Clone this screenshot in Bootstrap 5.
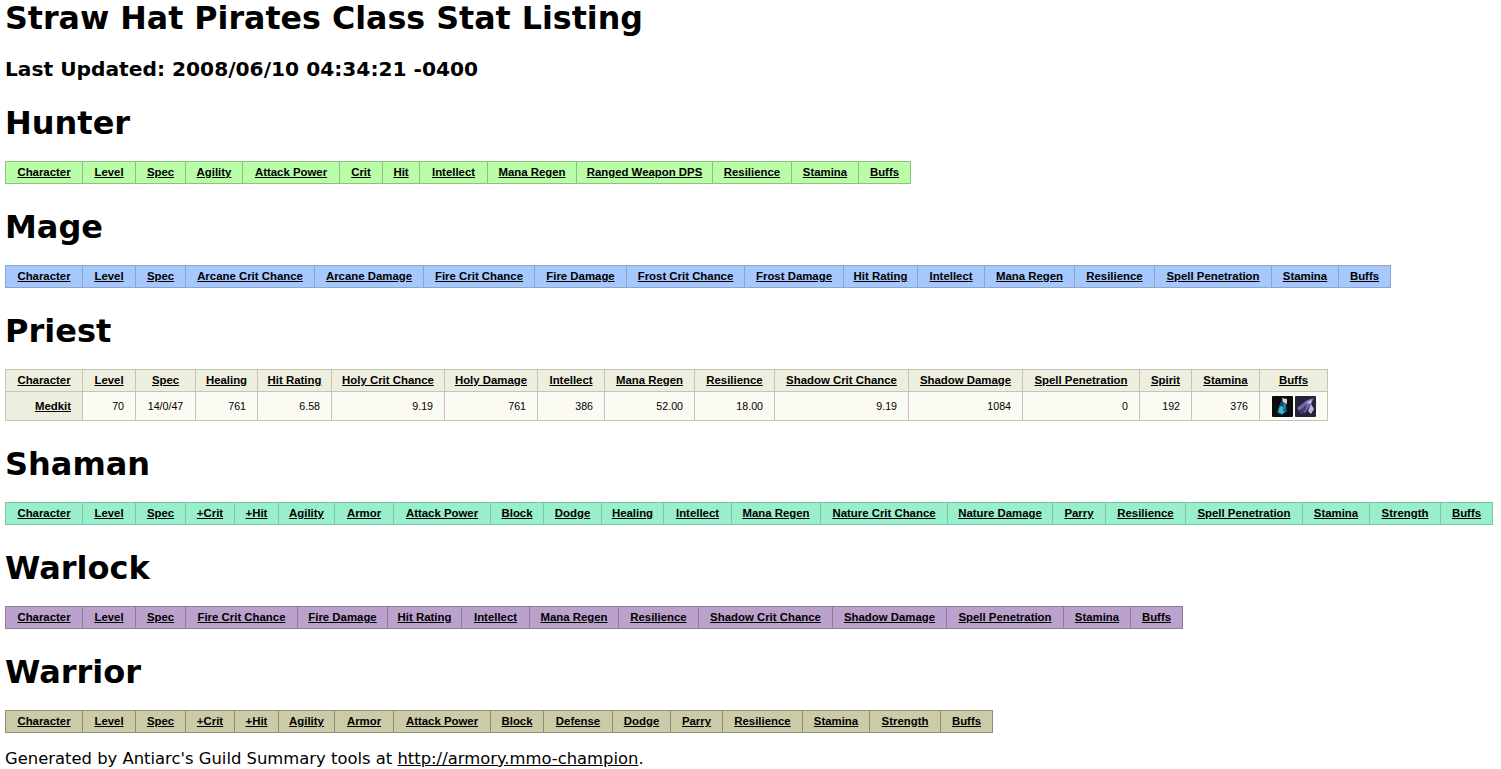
<!DOCTYPE html>
<html lang="en">
<head>
<meta charset="utf-8">
<title>Straw Hat Pirates Class Stat Listing</title>
<link href="https://cdn.jsdelivr.net/npm/bootstrap@5.3.0/dist/css/bootstrap.min.css" rel="stylesheet">
<style>
body { margin: 0; padding: 0 5px; font-family: "DejaVu Sans", sans-serif; color: #000; background: #fff; overflow-x: hidden; }
.page-title { font-size: 31.7px; font-weight: 700; line-height: 37px; margin: 0 0 21px; }
.updated { font-size: 20.2px; font-weight: 700; line-height: 23px; margin: 0 0 24px; }
.class-name { font-size: 32px; font-weight: 700; line-height: 37px; margin: 0 0 19px; }
.stat-table { width: auto; margin: 0 0 25px; border-collapse: collapse; font-family: "Liberation Sans", Arial, sans-serif; font-size: 10.67px; color: #000; }
.stat-table th, .stat-table td { padding: 0 11px; border: 1px solid #999; line-height: 21px; white-space: nowrap; background: transparent; box-shadow: none; color: #000; }
.stat-table th { padding: 0 4px; font-size: 11.4px; font-weight: 700; text-align: center; }
.stat-table a { color: #000; text-decoration: underline; }
.stat-table td, .stat-table th.rowhead { vertical-align: middle; height: 29px; }
.stat-table td { text-align: right; }
.stat-table td.spec, .stat-table td.buffs { text-align: center; padding: 0 4px; }
.stat-table td.buffs { line-height: 0; padding-left: 5px; }
.stat-table th.rowhead { text-align: right; padding-right: 11px; }
.hunter th { background: #b9fda6; border-color: #8fbf84; }
.mage th { background: #a6c8fd; border-color: #8aa6cc; }
.priest th { background: #eeeede; border-color: #c4c4b8; }
.priest td { background: #fbfbf3; border-color: #c4c4b8; }
.shaman th { background: #99eecc; border-color: #7cc4a8; }
.warlock th { background: #bba2cc; border-color: #8e7b9c; }
.warrior { margin-bottom: 16px; }
.warrior th { background: #cccba8; border-color: #8f8d74; }
.buff-icon { width: 21px; height: 21px; display: inline-block; margin: 0 1px; vertical-align: middle; }
.footer-line { font-size: 16.4px; line-height: 19px; margin: 0; }
.footer-line a { color: #000; }
</style>
</head>
<body>
<h1 class="page-title">Straw Hat Pirates Class Stat Listing</h1>
<h2 class="updated">Last Updated: 2008/06/10 04:34:21 -0400</h2>

<h2 class="class-name">Hunter</h2>
<table class="table stat-table hunter"><colgroup><col width="77"><col width="53"><col width="50"><col width="57"><col width="97"><col width="43"><col width="37"><col width="68"><col width="89"><col width="136"><col width="79"><col width="67"><col width="52"></colgroup><thead><tr>
<th><a href="#">Character</a></th><th><a href="#">Level</a></th><th><a href="#">Spec</a></th><th><a href="#">Agility</a></th><th><a href="#">Attack Power</a></th><th><a href="#">Crit</a></th><th><a href="#">Hit</a></th><th><a href="#">Intellect</a></th><th><a href="#">Mana Regen</a></th><th><a href="#">Ranged Weapon DPS</a></th><th><a href="#">Resilience</a></th><th><a href="#">Stamina</a></th><th><a href="#">Buffs</a></th>
</tr></thead></table>

<h2 class="class-name">Mage</h2>
<table class="table stat-table mage"><colgroup><col width="77"><col width="53"><col width="50"><col width="129"><col width="109"><col width="111"><col width="92"><col width="118"><col width="99"><col width="74"><col width="67"><col width="90"><col width="80"><col width="117"><col width="67"><col width="52"></colgroup><thead><tr>
<th><a href="#">Character</a></th><th><a href="#">Level</a></th><th><a href="#">Spec</a></th><th><a href="#">Arcane Crit Chance</a></th><th><a href="#">Arcane Damage</a></th><th><a href="#">Fire Crit Chance</a></th><th><a href="#">Fire Damage</a></th><th><a href="#">Frost Crit Chance</a></th><th><a href="#">Frost Damage</a></th><th><a href="#">Hit Rating</a></th><th><a href="#">Intellect</a></th><th><a href="#">Mana Regen</a></th><th><a href="#">Resilience</a></th><th><a href="#">Spell Penetration</a></th><th><a href="#">Stamina</a></th><th><a href="#">Buffs</a></th>
</tr></thead></table>

<h2 class="class-name">Priest</h2>
<table class="table stat-table priest"><colgroup><col width="77"><col width="53"><col width="60"><col width="62"><col width="74"><col width="113"><col width="93"><col width="67"><col width="90"><col width="80"><col width="134"><col width="114"><col width="117"><col width="52"><col width="68"><col width="68"></colgroup><thead><tr>
<th><a href="#">Character</a></th><th><a href="#">Level</a></th><th><a href="#">Spec</a></th><th><a href="#">Healing</a></th><th><a href="#">Hit Rating</a></th><th><a href="#">Holy Crit Chance</a></th><th><a href="#">Holy Damage</a></th><th><a href="#">Intellect</a></th><th><a href="#">Mana Regen</a></th><th><a href="#">Resilience</a></th><th><a href="#">Shadow Crit Chance</a></th><th><a href="#">Shadow Damage</a></th><th><a href="#">Spell Penetration</a></th><th><a href="#">Spirit</a></th><th><a href="#">Stamina</a></th><th><a href="#">Buffs</a></th>
</tr></thead><tbody><tr>
<th class="rowhead"><a href="#">Medkit</a></th><td>70</td><td class="spec">14/0/47</td><td>761</td><td>6.58</td><td>9.19</td><td>761</td><td>386</td><td>52.00</td><td>18.00</td><td>9.19</td><td>1084</td><td>0</td><td>192</td><td>376</td>
<td class="buffs"><svg class="buff-icon" viewBox="0 0 21 21" role="img" aria-label="Flask buff"><rect width="21" height="21" rx="1" fill="#0b0c10"/><path d="M10 4l5 1-1 5 1 5-5 4-5-2 2-7z" fill="#14506e"/><path d="M8 10l3 1 0 4 3 0-4 3-4-2z" fill="#35b8dc"/><path d="M12 7l2 1-1 6-2-1z" fill="#2b86a8"/><path d="M10 2l5 1 0 5-4-2z" fill="#d9d4c6"/></svg><svg class="buff-icon" viewBox="0 0 21 21" role="img" aria-label="Claw buff"><rect width="21" height="21" rx="1" fill="#26223a"/><path d="M2 12L12 4l7-2-3 6-6 9-2-1 4-7-8 6z" fill="#6f68a6"/><path d="M11 7l6-4-1 5-3 7 3 3 3-5-3-5z" fill="#bdb6e0"/><path d="M4 17l5-6 2 2-4 5z" fill="#443e6e"/></svg></td>
</tr></tbody></table>

<h2 class="class-name">Shaman</h2>
<table class="table stat-table shaman"><colgroup><col width="77"><col width="53"><col width="50"><col width="49"><col width="44"><col width="56"><col width="59"><col width="97"><col width="53"><col width="58"><col width="62"><col width="68"><col width="89"><col width="127"><col width="105"><col width="53"><col width="80"><col width="117"><col width="67"><col width="71"><col width="52"></colgroup><thead><tr>
<th><a href="#">Character</a></th><th><a href="#">Level</a></th><th><a href="#">Spec</a></th><th><a href="#">+Crit</a></th><th><a href="#">+Hit</a></th><th><a href="#">Agility</a></th><th><a href="#">Armor</a></th><th><a href="#">Attack Power</a></th><th><a href="#">Block</a></th><th><a href="#">Dodge</a></th><th><a href="#">Healing</a></th><th><a href="#">Intellect</a></th><th><a href="#">Mana Regen</a></th><th><a href="#">Nature Crit Chance</a></th><th><a href="#">Nature Damage</a></th><th><a href="#">Parry</a></th><th><a href="#">Resilience</a></th><th><a href="#">Spell Penetration</a></th><th><a href="#">Stamina</a></th><th><a href="#">Strength</a></th><th><a href="#">Buffs</a></th>
</tr></thead></table>

<h2 class="class-name">Warlock</h2>
<table class="table stat-table warlock"><colgroup><col width="77"><col width="53"><col width="50"><col width="112"><col width="90"><col width="74"><col width="68"><col width="89"><col width="80"><col width="134"><col width="114"><col width="117"><col width="67"><col width="52"></colgroup><thead><tr>
<th><a href="#">Character</a></th><th><a href="#">Level</a></th><th><a href="#">Spec</a></th><th><a href="#">Fire Crit Chance</a></th><th><a href="#">Fire Damage</a></th><th><a href="#">Hit Rating</a></th><th><a href="#">Intellect</a></th><th><a href="#">Mana Regen</a></th><th><a href="#">Resilience</a></th><th><a href="#">Shadow Crit Chance</a></th><th><a href="#">Shadow Damage</a></th><th><a href="#">Spell Penetration</a></th><th><a href="#">Stamina</a></th><th><a href="#">Buffs</a></th>
</tr></thead></table>

<h2 class="class-name">Warrior</h2>
<table class="table stat-table warrior"><colgroup><col width="77"><col width="53"><col width="50"><col width="49"><col width="44"><col width="56"><col width="59"><col width="97"><col width="53"><col width="69"><col width="58"><col width="52"><col width="80"><col width="67"><col width="71"><col width="52"></colgroup><thead><tr>
<th><a href="#">Character</a></th><th><a href="#">Level</a></th><th><a href="#">Spec</a></th><th><a href="#">+Crit</a></th><th><a href="#">+Hit</a></th><th><a href="#">Agility</a></th><th><a href="#">Armor</a></th><th><a href="#">Attack Power</a></th><th><a href="#">Block</a></th><th><a href="#">Defense</a></th><th><a href="#">Dodge</a></th><th><a href="#">Parry</a></th><th><a href="#">Resilience</a></th><th><a href="#">Stamina</a></th><th><a href="#">Strength</a></th><th><a href="#">Buffs</a></th>
</tr></thead></table>

<p class="footer-line">Generated by Antiarc's Guild Summary tools at <a href="#">http://armory.mmo-champion</a>.</p>
<script src="https://cdn.jsdelivr.net/npm/bootstrap@5.3.0/dist/js/bootstrap.bundle.min.js"></script>
</body>
</html>
